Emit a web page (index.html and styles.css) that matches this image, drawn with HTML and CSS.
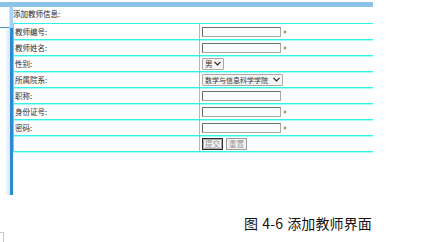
FILE: index.html
```html
<!DOCTYPE html>
<html lang="zh">
<head>
<meta charset="utf-8">
<title>添加教师信息</title>
<link rel="stylesheet" href="styles.css">
</head>
<body>
<div class="page">
  <div class="topbar"></div>
  <div class="main">
    <div class="side">
      <div class="side-top"><div class="tab"></div><div class="strip"></div></div>
      <div class="side-bottom"><div class="fade"></div><div class="bar"></div></div>
    </div>
    <div class="content">
      <div class="title">添加教师信息:</div>
      <div class="form">
        <div class="row"><div class="label">教师编号:</div><div class="field"><span class="input"></span><span class="req"></span></div></div>
        <div class="row"><div class="label">教师姓名:</div><div class="field"><span class="input"></span><span class="req"></span></div></div>
        <div class="row"><div class="label">性别:</div><div class="field"><span class="select sex"><span class="opt">男</span><svg class="chev" width="7" height="5" viewBox="0 0 7 5"><path d="M0.5 0.8 L3.5 3.8 L6.5 0.8" fill="none" stroke="#222" stroke-width="1.2"/></svg></span></div></div>
        <div class="row"><div class="label">所属院系:</div><div class="field"><span class="select dept"><span class="opt">数学与信息科学学院</span><svg class="chev" width="7" height="5" viewBox="0 0 7 5"><path d="M0.5 0.8 L3.5 3.8 L6.5 0.8" fill="none" stroke="#222" stroke-width="1.2"/></svg></span></div></div>
        <div class="row"><div class="label">职称:</div><div class="field"><span class="input"></span></div></div>
        <div class="row"><div class="label">身份证号:</div><div class="field"><span class="input"></span><span class="req"></span></div></div>
        <div class="row"><div class="label">密码:</div><div class="field"><span class="input"></span><span class="req"></span></div></div>
        <div class="row"><div class="label"></div><div class="field buttons"><span class="btn primary">提交</span><span class="btn">重置</span></div></div>
      </div>
    </div>
  </div>
  <div class="caption">图 4-6 添加教师界面</div>
  <div class="corner"></div>
</div>
</body>
</html>
```

FILE: styles.css
```css
html, body {
  margin: 0;
  padding: 0;
  background: #ffffff;
}
body {
  width: 422px;
  height: 242px;
  overflow: hidden;
  font-family: "Noto Sans CJK SC", "Noto Sans", sans-serif;
  color: #333;
}
.page {
  padding-top: 2px;
}
.topbar {
  width: 373px;
  height: 5px;
  background: #8dc3e9;
}
.main {
  display: flex;
}
.side {
  width: 13px;
  display: flex;
  flex-direction: column;
}
.side-top {
  display: flex;
  height: 21px;
}
.tab {
  width: 10px;
  box-sizing: border-box;
  border-right: 1px solid #d6e6f2;
  border-bottom: 1px solid #3f95d6;
  background: #fbfdff;
}
.strip {
  width: 3px;
  background: #a9d1f1;
}
.side-bottom {
  display: flex;
  height: 167px;
}
.fade {
  width: 10px;
  background: linear-gradient(to right, #ffffff 0%, #ffffff 45%, #d3e8f8 100%);
}
.bar {
  width: 3px;
  background: #2b8bd2;
}
.content {
  width: 360px;
}
.title {
  height: 16px;
  box-sizing: border-box;
  padding-top: 2px;
  font-size: 7.5px;
  line-height: 10px;
  color: #222;
}
.form {
  border-top: 1px solid #2ef2f2;
  border-left: 1px solid #2ef2f2;
}
.row {
  display: grid;
  grid-template-columns: 186px 1fr;
  height: 16px;
  box-sizing: border-box;
  border-bottom: 1px solid #2ef2f2;
  box-shadow: 0 1px 0 #a6fafa;
}
.label {
  border-right: 1px solid #2ef2f2;
  padding-left: 1px;
  font-size: 7.5px;
  line-height: 15px;
  color: #2a2a2a;
}
.field {
  display: flex;
  align-items: center;
  padding-left: 2px;
}
.input {
  width: 79px;
  height: 10px;
  box-sizing: border-box;
  border: 1px solid;
  border-color: #6e6e6e #a8a8a8 #a8a8a8 #6e6e6e;
  background: #fff;
}
.req {
  margin-left: 3px;
  width: 2px;
  height: 2px;
  background: #b9936f;
  box-shadow: 0 0 0 0.5px #d9c4b0;
}
.select {
  display: inline-flex;
  align-items: center;
  justify-content: space-between;
  height: 12px;
  box-sizing: border-box;
  border: 1px solid #a9a9a9;
  border-radius: 1px;
  background: #f6f6f6;
  padding: 0 2px 0 2px;
  font-size: 7.5px;
  line-height: 10px;
  color: #333;
}
.sex {
  width: 22px;
}
.dept {
  width: 81px;
  font-size: 7px;
}
.chev {
  display: block;
}
.buttons {
  gap: 3px;
}
.btn {
  width: 21px;
  height: 12px;
  box-sizing: border-box;
  border: 1px solid #9a9a9a;
  background: #f0f0f0;
  font-size: 7.5px;
  line-height: 10px;
  color: #9a9a9a;
  text-align: center;
}
.btn.primary {
  border-color: #2c2c2c;
  box-shadow: inset 0 0 0 1px #b0b0b0;
}
.caption {
  margin-top: 20px;
  padding-left: 244px;
  font-size: 14px;
  line-height: 17px;
  letter-spacing: 0.1px;
  word-spacing: 1px;
  color: #111;
}
.corner {
  margin-top: 0;
  width: 3px;
  height: 9px;
  border-top: 1px solid #c8c8c8;
  border-right: 1px solid #c8c8c8;
}
```
